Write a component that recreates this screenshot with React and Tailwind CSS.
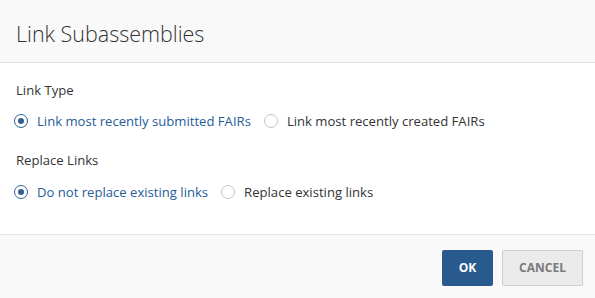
import React from 'react';

function Radio({ checked, label }) {
  return (
    <label className="flex items-center gap-[9px] h-5 cursor-pointer">
      <span
        className={
          'flex items-center justify-center w-[14px] h-[14px] rounded-full border bg-white ' +
          (checked ? 'border-[#2d5f95]' : 'border-[#c4c4c4]')
        }
      >
        {checked && <span className="w-[6px] h-[6px] rounded-full bg-[#2d5f95]" />}
      </span>
      <span className={checked ? 'text-[#255c99]' : 'text-[#333333]'}>{label}</span>
    </label>
  );
}

export default function App() {
  return (
    <div className="w-[595px] h-[298px] bg-white text-[13.1px] leading-5 text-[#333333] font-['Open_Sans','Liberation_Sans',sans-serif] flex flex-col">
      <header className="h-[63px] bg-[#f9f9f9] border-b border-[#e3e3e3] flex items-center px-4 pt-[5px]">
        <h1 className="text-[21.5px] font-light text-[#333333]">Link Subassemblies</h1>
      </header>

      <main className="pl-[14px] pr-4 pt-[17px] pb-[32px] border-b border-[#e3e3e3]">
        <div className="pl-[2px]">Link Type</div>
        <div className="flex items-center gap-[13px] mt-[11px]">
          <Radio checked label="Link most recently submitted FAIRs" />
          <Radio label="Link most recently created FAIRs" />
        </div>

        <div className="pl-[2px] mt-[19px]">Replace Links</div>
        <div className="flex items-center gap-[13px] mt-[12px]">
          <Radio checked label="Do not replace existing links" />
          <Radio label="Replace existing links" />
        </div>
      </main>

      <footer className="flex-1 bg-[#f9f9f9] flex justify-end items-start gap-[9px] pt-[15px] pr-3">
        <button className="w-[51px] h-9 rounded-[2px] bg-[#285a8e] text-white text-[12px] font-bold">
          OK
        </button>
        <button className="w-[81px] h-9 rounded-[2px] bg-[#ebebeb] border border-[#cfcfcf] text-[#7a7a7a] text-[12px] font-bold">
          CANCEL
        </button>
      </footer>
    </div>
  );
}
